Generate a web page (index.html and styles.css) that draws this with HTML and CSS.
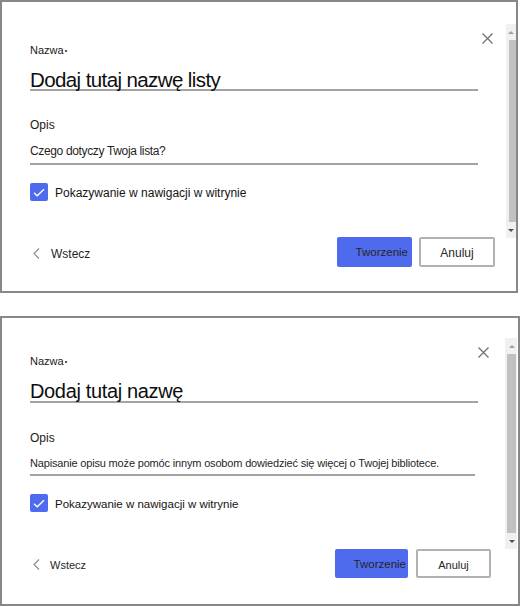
FILE: index.html
```html
<!DOCTYPE html>
<html lang="pl">
<head>
    <meta charset="UTF-8">
    <meta name="viewport" content="width=device-width, initial-scale=1.0">
    <title>Utwórz listę</title>
    <link rel="stylesheet" href="styles.css">
</head>
<body>
    <div class="page">
        <div class="panel panel-list">
            <div class="scrollbar">
                <span class="arrow up"></span>
                <span class="thumb"></span>
                <span class="arrow down"></span>
            </div>
            <button class="close" aria-label="Zamknij">
                <svg width="11" height="11" viewBox="0 0 11 11"><path d="M0.5 0.5 L10.5 10.5 M10.5 0.5 L0.5 10.5" stroke="#6e6e6e" stroke-width="1.2" fill="none"/></svg>
            </button>
            <div class="form">
                <div class="label name">Nazwa<span class="req">•</span></div>
                <div class="field title">Dodaj tutaj nazwę listy</div>
                <div class="label opis">Opis</div>
                <div class="field desc">Czego dotyczy Twoja lista?</div>
                <div class="check">
                    <span class="box">
                        <svg width="12" height="9" viewBox="0 0 12 9"><path d="M1 4.8 L4.2 7.8 L11 1.2" stroke="#fff" stroke-width="1.3" fill="none"/></svg>
                    </span>
                    <span class="check-label">Pokazywanie w nawigacji w witrynie</span>
                </div>
            </div>
            <div class="footer">
                <div class="back">
                    <svg width="7" height="11" viewBox="0 0 7 11"><path d="M6 0.5 L1 5.5 L6 10.5" stroke="#8a8a8a" stroke-width="1.1" fill="none"/></svg>
                    <span>Wstecz</span>
                </div>
                <div class="actions">
                    <button class="btn btn-primary">Tworzenie</button>
                    <button class="btn btn-default">Anuluj</button>
                </div>
            </div>
        </div>

        <div class="panel panel-lib">
            <div class="scrollbar">
                <span class="arrow up"></span>
                <span class="thumb"></span>
                <span class="arrow down"></span>
            </div>
            <button class="close" aria-label="Zamknij">
                <svg width="11" height="11" viewBox="0 0 11 11"><path d="M0.5 0.5 L10.5 10.5 M10.5 0.5 L0.5 10.5" stroke="#6e6e6e" stroke-width="1.2" fill="none"/></svg>
            </button>
            <div class="form">
                <div class="label name">Nazwa<span class="req">•</span></div>
                <div class="field title">Dodaj tutaj nazwę</div>
                <div class="label opis">Opis</div>
                <div class="field desc">Napisanie opisu może pomóc innym osobom dowiedzieć się więcej o Twojej bibliotece.</div>
                <div class="check">
                    <span class="box">
                        <svg width="12" height="9" viewBox="0 0 12 9"><path d="M1 4.8 L4.2 7.8 L11 1.2" stroke="#fff" stroke-width="1.3" fill="none"/></svg>
                    </span>
                    <span class="check-label">Pokazywanie w nawigacji w witrynie</span>
                </div>
            </div>
            <div class="footer">
                <div class="back">
                    <svg width="7" height="11" viewBox="0 0 7 11"><path d="M6 0.5 L1 5.5 L6 10.5" stroke="#8a8a8a" stroke-width="1.1" fill="none"/></svg>
                    <span>Wstecz</span>
                </div>
                <div class="actions">
                    <button class="btn btn-primary">Tworzenie</button>
                    <button class="btn btn-default">Anuluj</button>
                </div>
            </div>
        </div>
    </div>
</body>
</html>
```

FILE: styles.css
```css
body {
    margin: 0;
    font-family: "Liberation Sans", Arial, sans-serif;
    color: #1a1a1a;
    background: #fff;
}
.page {
    display: flex;
    flex-direction: column;
    gap: 23px;
}
.panel {
    position: relative;
    box-sizing: border-box;
    border: 2px solid #878787;
    display: flex;
    flex-direction: column;
}
.panel-list {
    width: 518px;
    height: 293px;
}
.panel-lib {
    width: 520px;
    height: 290px;
}

/* fake scrollbar on the right */
.scrollbar {
    position: absolute;
    right: 0;
    top: 22px;
    width: 10px;
    height: 214px;
    background: #f0f0f0;
    display: flex;
    flex-direction: column;
    align-items: flex-end;
}
.panel-lib .scrollbar {
    right: 1px;
    top: 20px;
    width: 12px;
    height: 211px;
}
.scrollbar .thumb {
    flex: 1;
    width: 7px;
    background: #c1c1c1;
}
.panel-lib .scrollbar .thumb {
    width: 9px;
    margin-right: 1px;
}
.scrollbar .arrow {
    height: 16px;
    width: 10px;
    display: flex;
    justify-content: center;
    align-items: center;
}
.scrollbar .arrow::before {
    content: "";
    border-left: 3px solid transparent;
    border-right: 3px solid transparent;
}
.scrollbar .up::before {
    border-bottom: 3px solid #a0a0a0;
}
.scrollbar .down::before {
    border-top: 3px solid #505050;
}
.close {
    position: absolute;
    top: 31px;
    right: 23px;
    width: 11px;
    height: 11px;
    padding: 0;
    border: none;
    background: none;
    display: flex;
}
.panel-lib .close {
    top: 29px;
    right: 29px;
}

.form {
    display: flex;
    flex-direction: column;
    align-items: stretch;
    padding: 41px 38px 0 28px;
}
.panel-lib .form {
    padding: 36px 40px 0 28px;
}
.label {
    font-size: 12px;
    line-height: 16px;
}
.label.name {
    font-size: 11px;
    line-height: 14px;
}
.req {
    font-size: 7px;
    vertical-align: 1px;
    margin-left: 1px;
}
.field {
    border-bottom: 2px solid #a3a3a3;
    color: #0d0d0d;
}
.field.title {
    margin-top: 12px;
    font-size: 20.5px;
    letter-spacing: -0.6px;
    line-height: 19px;
}
.panel-lib .field.title {
    margin-top: 13px;
    font-size: 20px;
    letter-spacing: -0.35px;
}
.label.opis {
    margin-top: 26px;
}
.panel-lib .label.opis {
    margin-top: 27px;
}
.field.desc {
    margin-top: 10px;
    font-size: 12px;
    letter-spacing: -0.35px;
    line-height: 16px;
    padding-bottom: 4px;
    color: #1f1f1f;
}
.panel-lib .field.desc {
    font-size: 11px;
    letter-spacing: -0.17px;
    line-height: 15px;
    padding-bottom: 3px;
    margin-right: 3px;
    white-space: nowrap;
}
.check {
    margin-top: 18px;
    display: flex;
    align-items: center;
    gap: 7px;
}
.box {
    width: 18px;
    height: 18px;
    border-radius: 2px;
    background: #4f6bed;
    display: flex;
    justify-content: center;
    align-items: center;
}
.check-label {
    font-size: 12px;
    padding-top: 1px;
    color: #141414;
}
.panel-lib .check-label {
    font-size: 11.5px;
}

.footer {
    margin-top: auto;
    display: flex;
    align-items: center;
    padding: 0 21px 24px 31px;
}
.panel-lib .footer {
    padding: 0 27px 26px 31px;
}
.back {
    display: flex;
    align-items: center;
    gap: 11px;
    margin-top: 3px;
    font-size: 12px;
    color: #1f1f1f;
}
.panel-lib .back {
    gap: 10px;
    margin-top: 2px;
    font-size: 11px;
}
.actions {
    margin-left: auto;
    display: flex;
    gap: 7px;
}
.panel-lib .actions {
    gap: 8px;
}
.btn {
    box-sizing: border-box;
    height: 30px;
    border-radius: 2px;
    font-family: "Liberation Sans", Arial, sans-serif;
    color: #262626;
    padding: 0;
}
.panel-lib .btn {
    height: 29px;
}
.btn-primary {
    width: 75px;
    background: #4f6bed;
    border: none;
    text-align: right;
    padding-right: 4px;
    font-size: 11.5px;
}
.panel-lib .btn-primary {
    width: 73px;
    padding-right: 2px;
}
.btn-default {
    width: 76px;
    background: #fff;
    border: 2px solid #b2b2b2;
    font-size: 12px;
    padding-top: 2px;
}
.panel-lib .btn-default {
    width: 75px;
    font-size: 11px;
}
```
